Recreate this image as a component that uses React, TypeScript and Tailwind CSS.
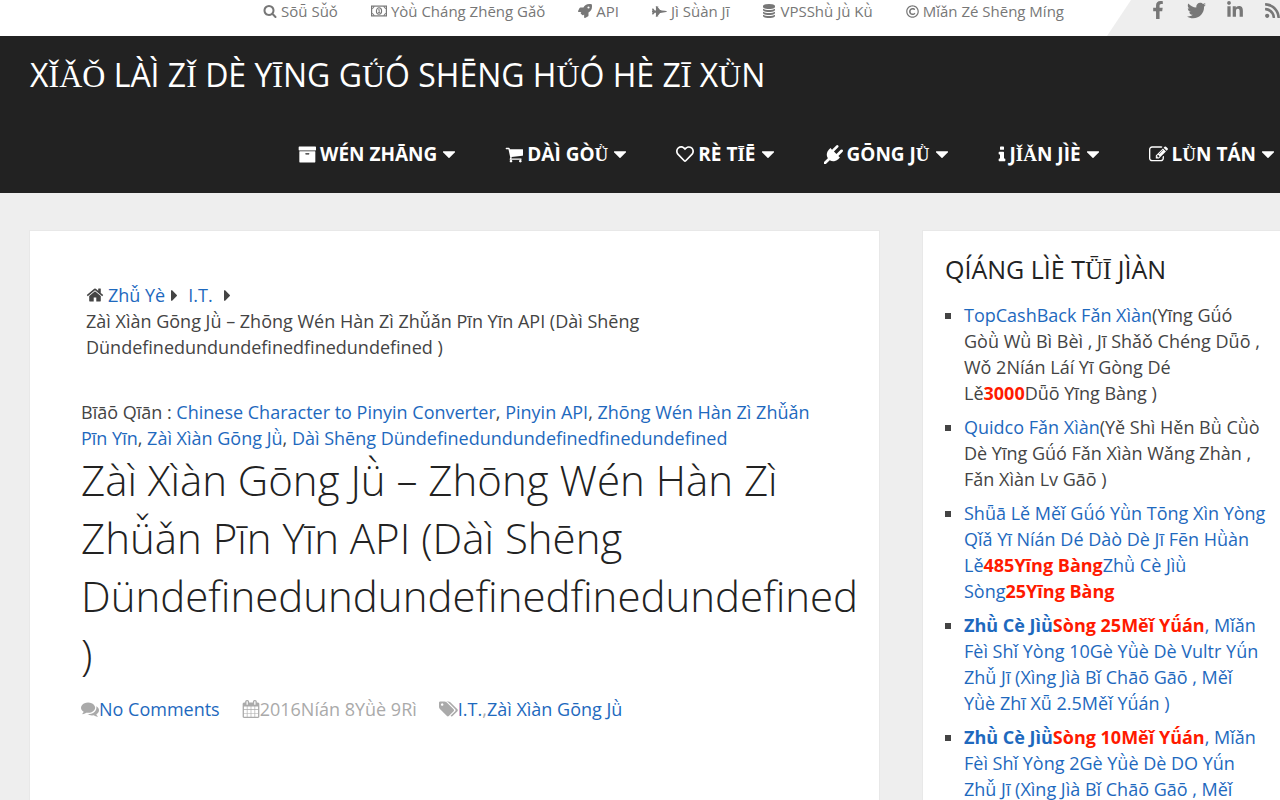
import React from "react";
import {
  FaFacebookF,
  FaFighterJet,
  FaLinkedinIn,
  FaRegCopyright,
  FaRegHeart,
  FaRocket,
  FaRss,
  FaTwitter,
} from "react-icons/fa";

const glyphs = {
  search:
    "M1216 832q0-185-131.5-316.5t-316.5-131.5-316.5 131.5-131.5 316.5 131.5 316.5 316.5 131.5 316.5-131.5 131.5-316.5zm512 832q0 52-38 90t-90 38q-54 0-90-38l-343-342q-179 124-399 124-143 0-273.5-55.5t-225-150-150-225-55.5-273.5 55.5-273.5 150-225 225-150 273.5-55.5 273.5 55.5 225 150 150 225 55.5 273.5q0 220-124 399l343 343q37 37 37 90z",
  calendar:
    "M192 1664h288v-288h-288v288zm352 0h320v-288h-320v288zm-352-352h288v-320h-288v320zm352 0h320v-320h-320v320zm-352-384h288v-288h-288v288zm736 736h320v-288h-320v288zm-384-736h320v-288h-320v288zm768 736h288v-288h-288v288zm-384-352h320v-320h-320v320zm-352-864v-288q0-13-9.5-22.5t-22.5-9.5h-64q-13 0-22.5 9.5t-9.5 22.5v288q0 13 9.5 22.5t22.5 9.5h64q13 0 22.5-9.5t9.5-22.5zm736 864h288v-320h-288v320zm-384-384h320v-288h-320v288zm384 0h288v-288h-288v288zm32-480v-288q0-13-9.5-22.5t-22.5-9.5h-64q-13 0-22.5 9.5t-9.5 22.5v288q0 13 9.5 22.5t22.5 9.5h64q13 0 22.5-9.5t9.5-22.5zm384-64v1280q0 52-38 90t-90 38h-1408q-52 0-90-38t-38-90v-1280q0-52 38-90t90-38h128v-96q0-66 47-113t113-47h64q66 0 113 47t47 113v96h384v-96q0-66 47-113t113-47h64q66 0 113 47t47 113v96h128q52 0 90 38t38 90z",
  home: "M1472 992v480q0 26-19 45t-45 19h-384v-384h-256v384h-384q-26 0-45-19t-19-45v-480q0-1 .5-3t.5-3l575-474 575 474q1 2 1 6zm223-69l-62 74q-8 9-21 11h-3q-13 0-21-7l-692-577-692 577q-12 8-24 7-13-2-21-11l-62-74q-8-10-7-23.5t11-21.5l719-599q32-26 76-26t76 26l244 204v-195q0-14 9-23t23-9h192q14 0 23 9t9 23v408l219 182q10 8 11 21.5t-7 23.5z",
  database:
    "M896 768q237 0 443-43t325-127v170q0 69-103 128t-280 93.5-385 34.5-385-34.5-280-93.5-103-128v-170q119 84 325 127t443 43zm0 768q237 0 443-43t325-127v170q0 69-103 128t-280 93.5-385 34.5-385-34.5-280-93.5-103-128v-170q119 84 325 127t443 43zm0-384q237 0 443-43t325-127v170q0 69-103 128t-280 93.5-385 34.5-385-34.5-280-93.5-103-128v-170q119 84 325 127t443 43zm0-1152q208 0 385 34.5t280 93.5 103 128v128q0 69-103 128t-280 93.5-385 34.5-385-34.5-280-93.5-103-128v-128q0-69 103-128t280-93.5 385-34.5z",
  cart: "M704 1536q0 52-38 90t-90 38-90-38-38-90 38-90 90-38 90 38 38 90zm896 0q0 52-38 90t-90 38-90-38-38-90 38-90 90-38 90 38 38 90zm128-1088v512q0 24-16.5 42.5t-40.5 21.5l-1044 122q13 60 13 70 0 16-24 64h920q26 0 45 19t19 45-19 45-45 19h-1024q-26 0-45-19t-19-45q0-11 8-31.5t16-36 21.5-40 15.5-29.5l-177-823h-204q-26 0-45-19t-19-45 19-45 45-19h256q16 0 28.5 6.5t19.5 15.5 13 24.5 8 26 5.5 29.5 4.5 26h1201q26 0 45 19t19 45z",
  edit: "M888 1184l116-116-152-152-116 116v56h96v96h56zm440-720q-16-16-33 1l-350 350q-17 17-1 33t33-1l350-350q17-17 1-33zm80 594v190q0 119-84.5 203.5t-203.5 84.5h-832q-119 0-203.5-84.5t-84.5-203.5v-832q0-119 84.5-203.5t203.5-84.5h832q63 0 117 25 15 7 18 23 3 17-9 29l-49 49q-14 14-32 8-23-6-45-6h-832q-66 0-113 47t-47 113v832q0 66 47 113t113 47h832q66 0 113-47t47-113v-126q0-13 9-22l64-64q15-15 35-7t20 29zm-96-738l288 288-672 672h-288v-288zm444 132l-92 92-288-288 92-92q28-28 68-28t68 28l152 152q28 28 28 68t-28 68z",
  plug: "M1755 453q37 38 37 90.5t-37 90.5l-401 400 150 150-160 160q-163 163-389.5 186.5t-411.5-100.5l-362 362h-181v-181l362-362q-124-185-100.5-411.5t186.5-389.5l160-160 150 150 400-401q38-37 91-37t90 37 37 90.5-37 90.5l-400 401 234 234 401-400q38-37 91-37t90 37z",
  info: "M1216 1344v128q0 26-19 45t-45 19h-512q-26 0-45-19t-19-45v-128q0-26 19-45t45-19h64v-384h-64q-26 0-45-19t-19-45v-128q0-26 19-45t45-19h384q26 0 45 19t19 45v576h64q26 0 45 19t19 45zm-128-1152v192q0 26-19 45t-45 19h-256q-26 0-45-19t-19-45v-192q0-26 19-45t45-19h256q26 0 45 19t19 45z",
  comments:
    "M1408 768q0 139-94 257t-256.5 186.5-353.5 68.5q-86 0-176-16-124 88-278 128-36 9-86 16h-3q-11 0-20.5-8t-11.5-21q-1-3-1-6.5t.5-6.5 2-6l2.5-5 3.5-5.5 4-5 4.5-5 4-4.5q5-6 23-25t26-29.5 22.5-29 25-38.5 20.5-44q-124-72-195-177t-71-224q0-139 94-257t256.5-186.5 353.5-68.5 353.5 68.5 256.5 186.5 94 257zm384 256q0 120-71 224.5t-195 176.5q10 24 20.5 44t25 38.5 22.5 29 26 29.5 23 25q1 1 4 4.5t4.5 5 4 5 3.5 5.5l2.5 5 2 6 .5 6.5-1 6.5q-3 14-13 22t-22 7q-50-7-86-16-154-40-278-128-90 16-176 16-271 0-472-132 58 4 88 4 161 0 309-45t264-129q125-92 192-212t67-254q0-77-23-152 129 71 204 178t75 230z",
  tags: "M448 448q0-53-37.5-90.5t-90.5-37.5-90.5 37.5-37.5 90.5 37.5 90.5 90.5 37.5 90.5-37.5 37.5-90.5zm1067 576q0 53-37 90l-491 492q-39 37-91 37-53 0-90-37l-715-716q-38-37-64.5-101t-26.5-117v-416q0-52 38-90t90-38h416q53 0 117 26.5t102 64.5l715 714q37 39 37 91zm384 0q0 53-37 90l-491 492q-39 37-91 37-36 0-59-14t-53-45l470-470q37-37 37-90 0-52-37-91l-715-714q-38-38-102-64.5t-117-26.5h224q53 0 117 26.5t102 64.5l715 714q37 39 37 91z",
  archive:
    "M1088 832q0-26-19-45t-45-19h-256q-26 0-45 19t-19 45 19 45 45 19h256q26 0 45-19t19-45zm576-192v960q0 26-19 45t-45 19h-1408q-26 0-45-19t-19-45v-960q0-26 19-45t45-19h1408q26 0 45 19t19 45zm64-448v256q0 26-19 45t-45 19h-1536q-26 0-45-19t-19-45v-256q0-26 19-45t45-19h1536q26 0 45 19t19 45z",
  caretDown: "M1024 64q0 26-19 45l-448 448q-19 19-45 19t-45-19l-448-448q-19-19-19-45t19-45 45-19h896q26 0 45 19t19 45z",
  caretRight: "M576 512q0 26-19 45l-448 448q-19 19-45 19t-45-19-19-45v-896q0-26 19-45t45-19 45 19l448 448q19 19 19 45z",
};

function Glyph({ name, className, box = "0 0 1792 1792" }: { name: keyof typeof glyphs; className: string; box?: string }) {
  return (
    <svg viewBox={box} fill="currentColor" aria-hidden="true" className={className}>
      <path d={glyphs[name]} />
    </svg>
  );
}

function Money() {
  return (
    <svg viewBox="0 0 16 12" fill="none" stroke="currentColor" aria-hidden="true" className="inline h-3 w-4">
      <rect x="0.6" y="1.1" width="14.8" height="9.8" strokeWidth="1.2" />
      <path d="M1 3.5Q3 3.5 3 1M13 1q0 2.500 2 2.500M1 8.500q2 0 2 2.500M13 11q0-2.500 2-2.500" strokeWidth="1" />
      <ellipse cx="8" cy="6" rx="2.600" ry="3.200" strokeWidth="1.100" />
      <path d="M7.200 5l1-.6v3.200M7 7.600h2.200" strokeWidth="0.900" />
    </svg>
  );
}

// Capitals with stacked or rare accents are set in the serif face.
function Caps({ children }: { children: string }) {
  return (
    <>
      {children.split(/([ǏǍǑĪǗǛǕ]+)/).map((part, i) =>
        i % 2 ? (
          <span key={i} className="font-['Liberation_Serif',serif] leading-none">
            {part}
          </span>
        ) : (
          part
        ),
      )}
    </>
  );
}

const topLinks = [
  { icon: <Glyph name="search" className="inline size-[14px]" />, label: "Sōǖ Sǚǒ" },
  { icon: <Money />, label: "Yòǜ Cháng Zhēng Gǎǒ" },
  { icon: <FaRocket className="inline size-[14px]" />, label: "API" },
  { icon: <FaFighterJet className="inline size-[15px]" />, label: "Jì Sǜàn Jī" },
  { icon: <Glyph name="database" className="inline size-[14px]" />, label: "VPSShǜ Jǜ Kǜ" },
  { icon: <FaRegCopyright className="inline size-[13px]" />, label: "Mǐǎn Zé Shēng Míng" },
];

const menu = [
  { icon: <Glyph name="archive" box="0 0 1728 1792" className="h-[19px] w-[18px]" />, label: "WÉN ZHĀNG" },
  { icon: <Glyph name="cart" box="0 0 1728 1792" className="h-[19px] w-[18px]" />, label: "DÀÌ GÒǛ" },
  { icon: <FaRegHeart className="size-[18px]" />, label: "RÈ TĪĒ" },
  { icon: <Glyph name="plug" className="size-[19px]" />, label: "GŌNG JǛ" },
  { icon: <Glyph name="info" box="512 0 768 1792" className="h-[19px] w-[8px]" />, label: "JǏǍN JÌÈ" },
  { icon: <Glyph name="edit" className="size-[19px]" />, label: "LǛN TÁN" },
];

const social = [
  { label: "Facebook", icon: <FaFacebookF className="size-[18px]" /> },
  { label: "Twitter", icon: <FaTwitter className="size-[19px]" /> },
  { label: "LinkedIn", icon: <FaLinkedinIn className="size-[18px]" /> },
  { label: "RSS", icon: <FaRss className="size-[17px]" /> },
];

function Red({ children }: { children: string }) {
  return <strong className="font-bold text-[#ff1a00]">{children}</strong>;
}

function A({ children }: { children: React.ReactNode }) {
  return (
    <a href="#" className="text-[#1e69be]">
      {children}
    </a>
  );
}

export default function App() {
  return (
    <div className="min-h-screen overflow-x-hidden bg-[#eeeeee] font-['Open_Sans','Noto_Sans',sans-serif] text-[18px] leading-[26px] text-[#444444]">
      <div className="flex h-9 justify-end gap-[43px] bg-white text-[#777777]">
        <nav aria-label="Secondary" className="flex gap-[33px] text-[15px] leading-[22px] whitespace-nowrap">
          {topLinks.map((l) => (
            <a key={l.label} href="#" className="flex h-[22px] items-center gap-1">
              {l.icon}
              {l.label}
            </a>
          ))}
        </nav>
        <div className="flex w-[173px] shrink-0 gap-5 bg-[#eeeeee] pl-[42px] [clip-path:polygon(24px_0,100%_0,100%_100%,0_100%)]">
          {social.map((s) => (
            <a key={s.label} href="#" aria-label={s.label} className="flex h-5 shrink-0 items-center">
              {s.icon}
            </a>
          ))}
        </div>
      </div>

      <header className="bg-[#222222] text-white">
        <h2 className="px-[30px] pt-[19px] text-[32px] leading-[40px] whitespace-nowrap">
          <a href="#">
            <Caps>XǏǍǑ LÀÌ ZǏ DÈ YĪNG GǗÓ SHĒNG HǗÓ HÈ ZĪ XǛN</Caps>
          </a>
        </h2>
        <nav aria-label="Primary" className="flex justify-end gap-[50px] pt-[46px] pr-[6px] pb-[26px] text-[19px] font-bold whitespace-nowrap">
          {menu.map((m) => (
            <a key={m.label} href="#" className="flex h-[26px] items-center gap-1">
              {m.icon}
              <span>
                <Caps>{m.label}</Caps>
              </span>
              <Glyph name="caretDown" box="0 0 1024 576" className="ml-[2px] h-[7px] w-3" />
            </a>
          ))}
        </nav>
      </header>

      <div className="grid grid-cols-[minmax(0,1fr)_357px] gap-11 pt-[38px] pl-[30px]">
        <main className="min-h-[640px] bg-white px-[51px] pt-[51px] shadow-[0_0_0_1px_#e8e8e8]">
          <nav aria-label="Breadcrumb" className="pl-[5px]">
            <div className="flex items-center">
              <Glyph name="home" className="mr-1 size-[18px]" />
              <A>Zhǚ Yè</A>
              <Glyph name="caretRight" box="0 0 576 1024" className="mr-[11px] ml-[6px] h-[11px] w-[6px]" />
              <A>I.T.</A>
              <Glyph name="caretRight" box="0 0 576 1024" className="ml-[11px] h-[11px] w-[6px]" />
            </div>
            <div>
              Zàì Xìàn Gōng Jǜ – Zhōng Wén Hàn Zì Zhǚǎn Pīn Yīn API (Dàì Shēng
              <br />
              Dündefinedundundefinedfinedundefined )
            </div>
          </nav>
          <p className="pt-[39px]">
            Bīāō Qīān : <A>Chinese Character to Pinyin Converter</A>, <A>Pinyin API</A>,{" "}
            <A>
              Zhōng Wén Hàn Zì Zhǚǎn
              <br />
              Pīn Yīn
            </A>
            , <A>Zàì Xìàn Gōng Jǜ</A>, <A>Dàì Shēng Dündefinedundundefinedfinedundefined</A>
          </p>
          <h1 className="text-[42px] leading-[58px] font-light whitespace-nowrap text-[#222222]">
            Zàì Xìàn Gōng Jǜ – Zhōng Wén Hàn Zì
            <br />
            Zhǚǎn Pīn Yīn API (Dàì Shēng
            <br />
            Dündefinedundundefinedfinedundefined
            <br />)
          </h1>
          <div className="flex gap-[22px] pt-[13px] text-[#aaaaaa]">
            <span className="flex items-center">
              <Glyph name="comments" className="size-[18px]" />
              <A>No Comments</A>
            </span>
            <span className="flex items-center">
              <Glyph name="calendar" className="size-[18px]" />
              2016Níán 8Yǜè 9Rì
            </span>
            <span className="flex items-center">
              <Glyph name="tags" box="0 0 1920 1792" className="h-[18px] w-[19px]" />
              <A>I.T.</A>,<A>Zàì Xìàn Gōng Jǜ</A>
            </span>
          </div>
        </main>

        <aside className="bg-white pt-[19px] pb-5 pl-[22px] shadow-[0_0_0_1px_#e8e8e8]">
          <h3 className="text-[25px] leading-[38px] text-[#222222]">
            <Caps>QÍÁNG LÌÈ TǕĪ JÌÀN</Caps>
          </h3>
          <ul className="list-[square] space-y-2 pt-[14px] pl-[19px] whitespace-nowrap">
            <li>
              <A>TopCashBack Fǎn Xìàn</A>(Yīng Gǘó
              <br />
              Gòǜ Wǜ Bì Bèì , Jī Shǎǒ Chéng Dǖō ,
              <br />
              Wǒ 2Níán Láí Yī Gòng Dé
              <br />
              Lě<Red>3000</Red>Dǖō Yīng Bàng )
            </li>
            <li>
              <A>Quidco Fǎn Xìàn</A>(Yě Shì Hěn Bǜ Cǜò
              <br />
              Dè Yīng Gǘó Fǎn Xìàn Wǎng Zhàn ,
              <br />
              Fǎn Xìàn Lv Gāō )
            </li>
            <li>
              <A>
                Shǖā Lě Měǐ Gǘó Yǜn Tōng Xìn Yòng
                <br />
                Qǐǎ Yī Níán Dé Dàò Dè Jī Fēn Hǜàn
                <br />
                Lě<Red>485Yīng Bàng</Red>Zhǜ Cè Jìǜ
                <br />
                Sòng<Red>25Yīng Bàng</Red>
              </A>
            </li>
            <li>
              <A>
                <strong className="font-bold">Zhǜ Cè Jìǜ</strong>
                <Red>Sòng 25Měǐ Yǘán</Red>, Mǐǎn
                <br />
                Fèì Shǐ Yòng 10Gè Yǜè Dè Vultr Yǘn
                <br />
                Zhǚ Jī (Xìng Jìà Bǐ Chāō Gāō , Měǐ
                <br />
                Yǜè Zhī Xǖ 2.5Měǐ Yǘán )
              </A>
            </li>
            <li>
              <A>
                <strong className="font-bold">Zhǜ Cè Jìǜ</strong>
                <Red>Sòng 10Měǐ Yǘán</Red>, Mǐǎn
                <br />
                Fèì Shǐ Yòng 2Gè Yǜè Dè DO Yǘn
                <br />
                Zhǚ Jī (Xìng Jìà Bǐ Chāō Gāō , Měǐ
              </A>
            </li>
          </ul>
        </aside>
      </div>
    </div>
  );
}
